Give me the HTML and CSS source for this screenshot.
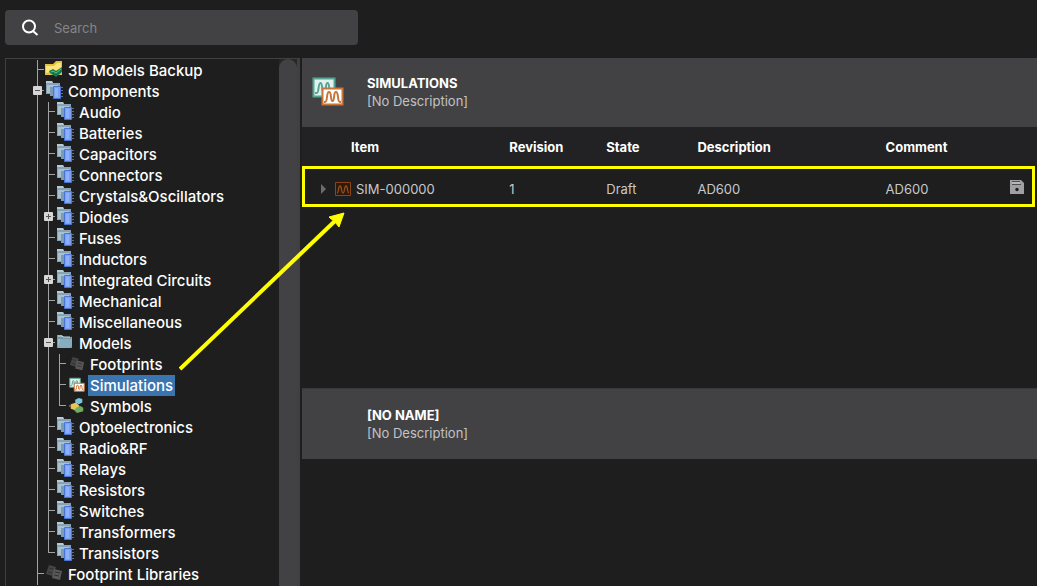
FILE: index.html
```html
<!DOCTYPE html>
<html lang="en">
<head>
<meta charset="utf-8">
<title>Library Explorer</title>
<link rel="stylesheet" href="styles.css">
<script src="tree.js" defer></script>
</head>
<body>
<svg class="sprites" aria-hidden="true">
  <symbol id="i-comp" viewBox="0 0 18 18">
    <path d="M1 0h6l1 2h7v11H1z" fill="#86a3b5"/>
    <path d="M2 4h11v8H2z" fill="#a9c2d0"/>
    <path d="M1 0h6l1 2H1z" fill="#b5ccd8"/>
    <path d="M15 6.500h3M15 9.500h3M15 12.500h3M15 15.500h3" stroke="#5d6f86"/>
    <path d="M5 6h4v9H5z" fill="#7d9bb5"/>
    <path d="M8.500 5.500h7v12h-7z" fill="#7ba2f2" stroke="#4a74d6"/>
    <path d="M10 7h3v9h-3z" fill="#8fb1f8"/>
  </symbol>
  <symbol id="i-backup" viewBox="0 0 18 18">
    <path d="M0 4h8l3-3h6v14H0z" fill="#e3c23c"/>
    <path d="M1 6h8l3-3h4v6L1 13z" fill="#fae67a"/>
    <path d="M4 11l4-2 3 2 6-4v5l-6 5-6-4z" fill="#14784f"/>
    <path d="M6 12l2-1 3 2 5-4" stroke="#58c890" fill="none"/>
  </symbol>
  <symbol id="i-folder" viewBox="0 0 18 18">
    <path d="M1 2h5l2 2h8v11H1z" fill="#7196a8"/>
    <path d="M2 6h13v7H2z" fill="#9fc2d0"/>
    <path d="M4 6h11l1-3v10l-2 2H2z" fill="#86adbe"/>
    <path d="M2 3h4l1 1h7" stroke="#c5dce5" fill="none"/>
  </symbol>
  <symbol id="i-foot" viewBox="0 0 18 18">
    <path d="M4 1l7 2-3 9-7-2z" fill="#454545"/>
    <path d="M9 5l8 2-2 9-8-2z" fill="#585858"/>
    <path d="M4 4l4 1M3 8l4 1M10 8l5 1M9 11l5 1" stroke="#303030"/>
  </symbol>
  <symbol id="i-sims" viewBox="0 0 32 30">
    <path d="M1.500 1.500h21v18h-21z" fill="#e2f1ed" stroke="#55a595" stroke-width="2"/>
    <path d="M3 16h2c2 0 1-10 3.500-10s1 10 3.500 10 1-10 3.500-10 1 8 3 10" fill="none" stroke="#55a595" stroke-width="2"/>
    <path d="M10.500 11.500h20v16h-20z" fill="#fff" stroke="#c77538" stroke-width="2"/>
    <path d="M12 25h1c3 0 1-10 4-10s1 9 3.500 9 .5-9 3.500-9 1 10 4 10h1" fill="none" stroke="#c77538" stroke-width="2"/>
  </symbol>
  <symbol id="i-symbols" viewBox="0 0 18 18">
    <path d="M7 2l4-2 4 1v4l-4 2-4-2z" fill="#76c6dc"/>
    <path d="M2 7l6-2 4 4-4 5-6-2z" fill="#e8c45b"/>
    <path d="M8 11l5-2 3 2v4l-7 2-3-3z" fill="#6fae60"/>
    <path d="M0 9h3" stroke="#d8a23a"/>
  </symbol>
</svg>

<header class="topbar">
  <label class="search">
    <svg class="search-icon" viewBox="0 0 18 18" aria-hidden="true"><circle cx="8" cy="7.500" r="6" fill="none" stroke="#fff" stroke-width="2"/><path d="M12 12l4.500 4" stroke="#fff" stroke-width="2"/></svg>
    <input class="search-input" type="text" placeholder="Search" aria-label="Search">
  </label>
</header>

<main class="workspace">
  <nav class="sidebar" aria-label="Library tree">
    <ul class="tree" id="tree"></ul>
    <div class="scrollbar"><div class="thumb"></div></div>
  </nav>

  <section class="details">
    <header class="banner">
      <svg class="banner-icon" aria-hidden="true"><use href="#i-sims"/></svg>
      <div>
        <h2 class="banner-title">SIMULATIONS</h2>
        <p class="banner-text">[No Description]</p>
      </div>
    </header>
    <div class="list">
      <table class="items">
        <thead>
          <tr><th class="col-item">Item</th><th class="col-rev">Revision</th><th class="col-state">State</th><th class="col-desc">Description</th><th>Comment</th><th class="col-save"></th></tr>
        </thead>
        <tbody>
          <tr>
            <td><div class="item">
              <button class="expand" aria-label="Expand"><svg viewBox="0 0 6 10" width="6" height="10"><path d="M0 0l5 5-5 5z" fill="#6c6c6e"/></svg></button>
              <svg class="item-icon" viewBox="0 0 16 14" aria-hidden="true"><path d="M.5.5h15v13H.500z" fill="#2b1a10" stroke="#8c4414"/><path d="M2 11c2 0 1-7 3-7s1 7 3 7 1-7 3-7 1 7 3 7" fill="none" stroke="#9b4d17" stroke-width="1.300"/></svg>
              <span>SIM-000000</span>
            </div></td>
            <td>1</td><td>Draft</td><td>AD600</td><td>AD600</td>
            <td><button class="save" aria-label="Save"><svg viewBox="0 0 14 14" width="14" height="14"><path d="M0 0h11l3 3v11H0z" fill="#a0a0a3"/><path d="M2 1.500h8M2 4.500h9" stroke="#4e4e51"/><path d="M2 3h8" stroke="#b8b8ba" stroke-width="2"/><circle cx="7" cy="9.500" r="1.700" fill="#202020"/></svg></button></td>
          </tr>
        </tbody>
      </table>
      <div class="highlight"></div>
    </div>
    <header class="banner banner-empty">
      <div>
        <h2 class="banner-title">[NO NAME]</h2>
        <p class="banner-text">[No Description]</p>
      </div>
    </header>
    <div class="preview"></div>
  </section>
</main>

<svg class="arrow" viewBox="0 0 168 160" aria-hidden="true"><path d="M1 158L157 9" stroke="#ff0" stroke-width="4"/><path d="M165 2l-5 14-4-5-5-4-1-1z" fill="#ff0" stroke="#ff0"/></svg>
</body>
</html>
```
FILE: tree.js
```js
// depth, label, icon, expander state, last sibling
const rows = [
  [0, "3D Models Backup", "backup"],
  [0, "Components", "comp", "minus"],
  [1, "Audio", "comp"],
  [1, "Batteries", "comp"],
  [1, "Capacitors", "comp"],
  [1, "Connectors", "comp"],
  [1, "Crystals&Oscillators", "comp"],
  [1, "Diodes", "comp", "plus"],
  [1, "Fuses", "comp"],
  [1, "Inductors", "comp"],
  [1, "Integrated Circuits", "comp", "plus"],
  [1, "Mechanical", "comp"],
  [1, "Miscellaneous", "comp"],
  [1, "Models", "folder", "minus"],
  [2, "Footprints", "foot"],
  [2, "Simulations", "sims"],
  [2, "Symbols", "symbols", "", true],
  [1, "Optoelectronics", "comp"],
  [1, "Radio&RF", "comp"],
  [1, "Relays", "comp"],
  [1, "Resistors", "comp"],
  [1, "Switches", "comp"],
  [1, "Transformers", "comp"],
  [1, "Transistors", "comp", "", true],
  [0, "Footprint Libraries", "foot"]
];

document.getElementById("tree").innerHTML = rows.map(([depth, label, icon, toggle, last]) => {
  const guides = '<span class="guide"></span>'.repeat(depth);
  const sign = toggle === "plus" ? "M2 4.500h5M4.500 2v5" : "M2 4.500h5";
  const button = toggle
    ? `<button class="toggle" aria-label="Toggle ${label.replace("&", "&amp;")}"><svg viewBox="0 0 9 9" width="9" height="9"><rect width="9" height="9" rx="1" fill="#d6d6d6"/><path d="${sign}" stroke="#555"/></svg></button>`
    : "";
  const selected = label === "Simulations" ? " selected" : "";
  return `<li class="row">${guides}<span class="branch${last ? " last" : ""}">${button}</span>` +
    `<svg class="icon${depth === 2 ? " small" : ""}" aria-hidden="true"><use href="#i-${icon}"/></svg>` +
    `<span class="label${selected}">${label.replace("&", "&amp;")}</span></li>`;
}).join("");
```
FILE: styles.css
```css
* { box-sizing: border-box; }

body {
  margin: 0;
  height: 100vh;
  display: flex;
  flex-direction: column;
  overflow: hidden;
  background: #1e1e1e;
  color: #fff;
  font-family: Inter, "Liberation Sans", sans-serif;
  font-size: 13px;
}

button {
  padding: 0;
  border: 0;
  background: none;
  display: block;
}

button svg { display: block; }

.sprites { display: none; }

.topbar { padding: 10px 5px 13px; }

.search {
  display: flex;
  align-items: center;
  gap: 15px;
  width: 34.4%;
  height: 35px;
  padding: 0 16px;
  border-radius: 4px;
  background: #424244;
}

.search-icon { width: 18px; height: 18px; flex: none; }

.search-input {
  flex: 1;
  min-width: 0;
  padding: 0;
  border: 0;
  outline: 0;
  background: none;
  color: #fff;
  font: inherit;
}

.search-input::placeholder { color: #858587; }

.workspace {
  flex: 1;
  min-height: 0;
  display: flex;
  gap: 2px;
  padding-left: 5px;
}

.sidebar {
  flex: 0 0 295px;
  display: flex;
  overflow: hidden;
  border: 1px solid #404042;
  border-width: 1px 3px 0 1px;
}

.tree {
  flex: 1;
  margin: 0;
  padding: 1px 0 0 31px;
  list-style: none;
  font-size: 15px;
  font-weight: 500;
}

.row {
  display: flex;
  align-items: center;
  height: 21px;
}

.guide {
  width: 11px;
  height: 21px;
  flex: none;
  border-left: 1px solid #a2a2a2;
}

.branch {
  position: relative;
  width: 8px;
  height: 21px;
  flex: none;
  background:
    linear-gradient(#a2a2a2, #a2a2a2) 0 0 / 1px 100% no-repeat,
    linear-gradient(#a2a2a2, #a2a2a2) 0 9px / 7px 1px no-repeat;
}

.branch.last {
  background-size: 1px 10px, 7px 1px;
}

.toggle {
  position: absolute;
  left: -4px;
  top: 5px;
}

.icon { width: 18px; height: 18px; flex: none; margin-bottom: 3px; }
.icon.small { width: 16px; height: 18px; margin-left: 2px; margin-bottom: 1px; }

.label {
  margin-left: 3px;
  padding: 0 2px;
  line-height: 21px;
  white-space: nowrap;
}

.label.selected { background: #3a75b0; }

.scrollbar { width: 18px; flex: none; background: #262627; }

.thumb {
  height: 100%;
  border-radius: 9px 9px 0 0;
  background: #424244;
}

.details {
  flex: 1;
  min-width: 0;
  display: flex;
  flex-direction: column;
}

.banner {
  display: flex;
  align-items: center;
  gap: 23px;
  height: 69px;
  flex: none;
  padding: 0 0 1px 10px;
  background: #424244;
}

.banner-empty { height: 71px; padding: 0 0 0 65px; border-top: 1px solid #38383a; }

.banner-icon { width: 32px; height: 30px; }

.banner-title,
.banner-text {
  margin: 0;
  font-size: 13px;
  line-height: 18px;
}

.banner-title { font-weight: 700; }
.banner-text { color: #c3c3c4; }

.list { position: relative; flex: 330 1 0; }

.items {
  width: 100%;
  table-layout: fixed;
  border-collapse: collapse;
  text-align: left;
}

.items th {
  height: 40px;
  padding: 0;
  background: #222224;
  font-weight: 700;
}

.items td {
  height: 40px;
  padding: 4px 0 0;
  color: #c8c8c9;
}

.items .col-item { width: 28.2%; padding-left: 49px; }
.col-rev { width: 13.2%; }
.col-state { width: 12.4%; }
.col-desc { width: 25.6%; }
.col-save { width: 27px; }

.item {
  display: flex;
  align-items: center;
  padding-left: 19px;
}

.item-icon { width: 16px; height: 14px; margin: 0 5px 0 8px; }

.save { margin-bottom: 5px; }

.highlight {
  position: absolute;
  inset: 39px 2px auto 0;
  height: 41px;
  border: 3px solid #ff0;
  pointer-events: none;
}

.preview { flex: 160 1 0; }

.arrow {
  position: absolute;
  left: 179px;
  top: 211px;
  width: 168px;
  height: 160px;
  pointer-events: none;
}
```
